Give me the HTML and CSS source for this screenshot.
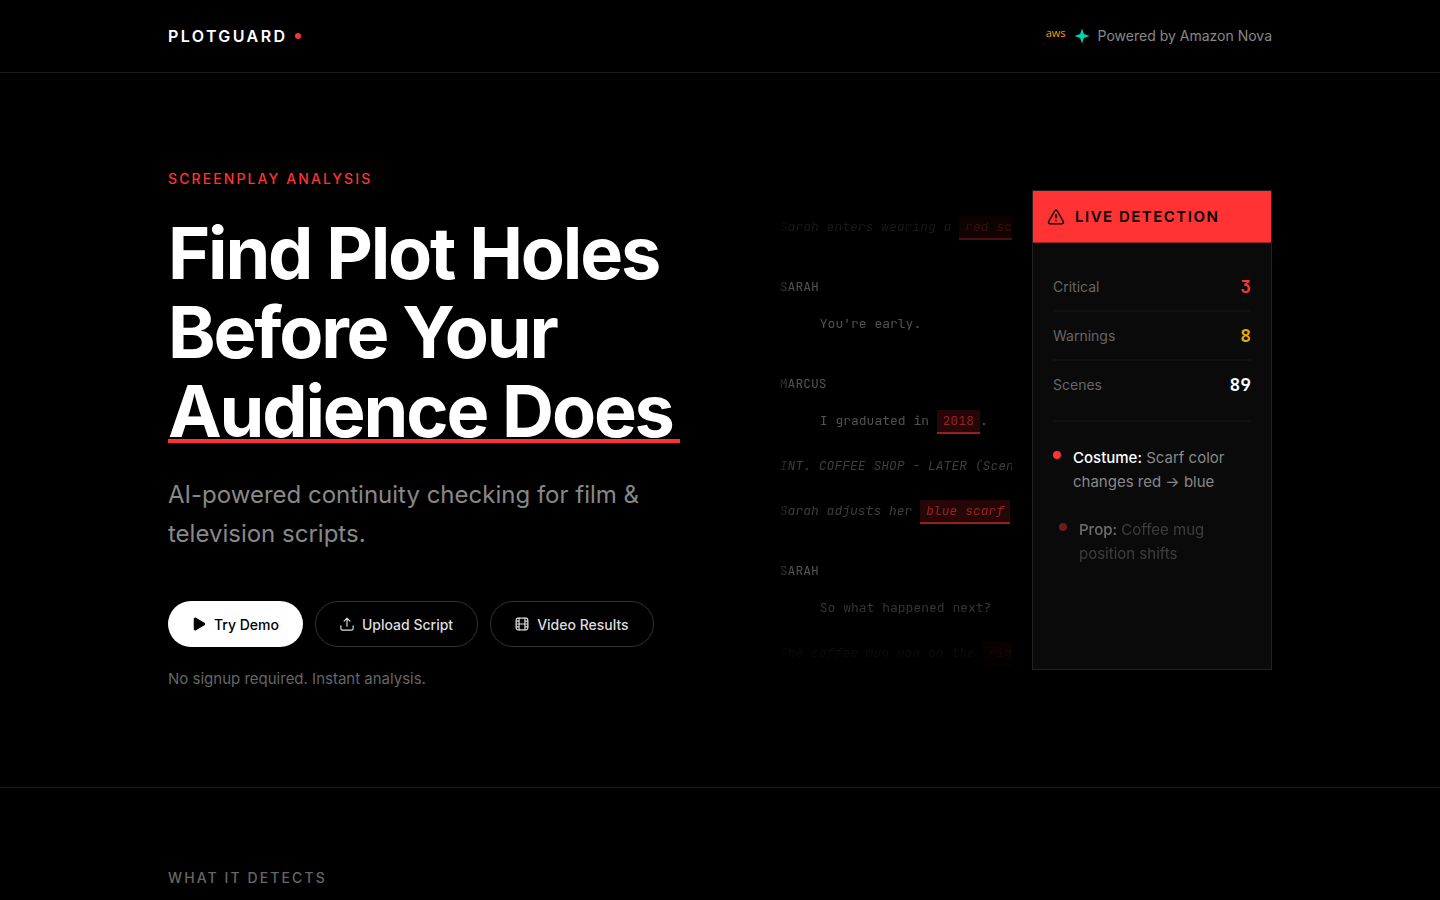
FILE: index.html
```html
<!DOCTYPE html>
<html lang="en">
<head>
  <meta charset="UTF-8">
  <meta name="viewport" content="width=device-width, initial-scale=1.0">
  <title>PlotGuard</title>
  <link rel="stylesheet" href="styles.css">
</head>
<body>
  <header class="header">
    <div class="container header-inner">
      <a href="#" class="logo">PLOTGUARD<span class="logo-dot"></span></a>
      <div class="powered">
        <span class="aws">aws</span>
        <svg class="nova" width="16" height="16" viewBox="0 0 16 16" fill="#00d4aa"><path d="M8 0.500L9.900 6.100L15.500 8L9.900 9.900L8 15.500L6.100 9.900L0.500 8L6.100 6.100Z"/></svg>
        <span>Powered by Amazon Nova</span>
      </div>
    </div>
  </header>

  <main>
    <section class="hero">
      <div class="container hero-grid">
        <div class="hero-left">
          <p class="label label-red">SCREENPLAY ANALYSIS</p>
          <h1>Find Plot Holes Before Your <span class="underline">Audience Does</span></h1>
          <p class="subtitle">AI-powered continuity checking for film &amp; television scripts.</p>
          <div class="actions">
            <button class="btn btn-primary">
              <svg width="14" height="14" viewBox="0 0 24 24" fill="currentColor" stroke="currentColor" stroke-width="2" stroke-linejoin="round"><path d="M4 3.500v17a1.500 1.500 0 0 0 2.300 1.300l14.500-8.400a1.600 1.600 0 0 0 0-2.800L6.300 2.200A1.500 1.500 0 0 0 4 3.500z"/></svg>
              Try Demo
            </button>
            <button class="btn">
              <svg width="14" height="14" viewBox="0 0 24 24" fill="none" stroke="currentColor" stroke-width="2" stroke-linecap="round" stroke-linejoin="round"><path d="M1.500 15v4.500a3 3 0 0 0 3 3h15a3 3 0 0 0 3-3V15M12 16V2M7 7l5-5 5 5"/></svg>
              Upload Script
            </button>
            <button class="btn">
              <svg width="14" height="14" viewBox="0 0 24 24" fill="none" stroke="currentColor" stroke-width="2" stroke-linecap="round" stroke-linejoin="round"><rect x="2" y="2" width="20" height="20" rx="3"/><path d="M7 2v20M17 2v20M2 12h20M2 7h5M2 17h5M17 17h5M17 7h5"/></svg>
              Video Results
            </button>
          </div>
          <p class="note">No signup required. Instant analysis.</p>
        </div>

        <div class="demo">
          <div class="script">
            <p class="action">Sarah enters wearing a <mark>red scarf</mark></p>
            <p class="character">SARAH</p>
            <p class="dialogue">You're early.</p>
            <p class="character">MARCUS</p>
            <p class="dialogue">I graduated in <mark>2018</mark>.</p>
            <p class="action">INT. COFFEE SHOP - LATER (Scene 12)</p>
            <p class="action">Sarah adjusts her <mark>blue scarf</mark></p>
            <p class="character">SARAH</p>
            <p class="dialogue">So what happened next?</p>
            <p class="action">The coffee mug now on the <mark>right side</mark></p>
          </div>

          <aside class="panel">
            <div class="panel-header">
              <svg width="18" height="18" viewBox="0 0 24 24" fill="none" stroke="currentColor" stroke-width="2" stroke-linecap="round" stroke-linejoin="round"><path d="M21.730 18l-8-14a2 2 0 0 0-3.480 0l-8 14A2 2 0 0 0 4 21h16a2 2 0 0 0 1.730-3zM12 9v4M12 17h.01"/></svg>
              <span>LIVE DETECTION</span>
            </div>
            <div class="panel-body">
              <dl class="stats">
                <div class="stat"><dt>Critical</dt><dd class="critical">3</dd></div>
                <div class="stat"><dt>Warnings</dt><dd class="warning">8</dd></div>
                <div class="stat"><dt>Scenes</dt><dd>89</dd></div>
              </dl>
              <ul class="issues">
                <li class="issue"><span class="dot"></span><p><strong>Costume:</strong> Scarf color changes red → blue</p></li>
                <li class="issue entering"><span class="dot"></span><p><strong>Prop:</strong> Coffee mug position shifts</p></li>
              </ul>
            </div>
          </aside>
        </div>
      </div>
    </section>

    <section class="detects">
      <div class="container">
        <h2 class="label">WHAT IT DETECTS</h2>
      </div>
    </section>
  </main>
</body>
</html>
```
FILE: styles.css
```css
* {
  margin: 0;
  padding: 0;
  box-sizing: border-box;
}

body {
  font-family: Inter, "Liberation Sans", sans-serif;
  background: #000;
  color: #fff;
  overflow-x: hidden;
}

.container {
  max-width: 1200px;
  margin: 0 auto;
  padding: 0 48px;
}

/* Header */
.header {
  border-bottom: 1px solid #1a1a1a;
}

.header-inner {
  display: flex;
  align-items: center;
  justify-content: space-between;
  height: 72px;
}

.logo {
  display: flex;
  align-items: center;
  gap: 8px;
  font-size: 16px;
  font-weight: 600;
  letter-spacing: 0.15em;
  color: #fff;
  text-decoration: none;
}

.logo-dot {
  width: 6px;
  height: 6px;
  border-radius: 50%;
  background: #ff3333;
}

.powered {
  display: flex;
  align-items: center;
  gap: 8px;
  font-size: 14px;
  line-height: 16px;
  color: #888;
}

.aws {
  font-family: "Open Sans", sans-serif;
  font-size: 11px;
  line-height: 14px;
  padding-bottom: 6px;
  color: #ff9900;
}

/* Hero */
.hero {
  padding: 96px 0;
  border-bottom: 1px solid #1a1a1a;
}

.hero-grid {
  display: grid;
  grid-template-columns: 1fr 1fr;
  gap: 100px;
  align-items: center;
}

.label {
  font-size: 14px;
  font-weight: 500;
  line-height: 20px;
  letter-spacing: 0.15em;
  color: #666;
}

.label-red {
  color: #ff3333;
  margin-bottom: 24px;
}

h1 {
  font-size: 72px;
  font-weight: 700;
  line-height: 79px;
  letter-spacing: -0.03em;
  margin-bottom: 25px;
}

.underline {
  position: relative;
  display: inline-block;
  padding-right: 7px;
  white-space: nowrap;
}

.underline::after {
  content: "";
  position: absolute;
  left: 0;
  right: 0;
  bottom: 7px;
  height: 4px;
  background: #ff3333;
}

.subtitle {
  font-size: 24px;
  line-height: 39px;
  color: #888;
  margin-bottom: 48px;
}

.actions {
  display: flex;
  gap: 12px;
  margin-bottom: 20px;
}

.btn {
  display: flex;
  align-items: center;
  gap: 8px;
  height: 46px;
  padding: 0 24px;
  border: 1px solid #333;
  border-radius: 23px;
  background: transparent;
  color: #ddd;
  font-family: inherit;
  font-size: 14px;
  font-weight: 500;
  white-space: nowrap;
  cursor: pointer;
}

.btn-primary {
  background: #fff;
  border: none;
  color: #000;
}

.note {
  font-size: 15px;
  line-height: 24px;
  color: #666;
}

/* Script and detection panel */
.demo {
  display: grid;
  grid-template-columns: minmax(0, 1fr) 240px;
  gap: 20px;
  height: 480px;
}

.script {
  overflow: hidden;
  padding-top: 25px;
  font-family: "JetBrains Mono", "DejaVu Sans Mono", monospace;
  font-size: 13px;
  line-height: 24px;
  white-space: nowrap;
  opacity: 0.6;
  mask-image: linear-gradient(to bottom, transparent, #000 20%, #000 80%, transparent), linear-gradient(to right, rgba(0, 0, 0, 0.4), #000 12px);
  mask-composite: intersect;
}

.action {
  font-style: italic;
  color: #666;
  margin-bottom: 21px;
}

.character {
  color: #888;
  margin-top: 36px;
  margin-bottom: 13px;
}

.dialogue {
  color: #888;
  padding-left: 40px;
  margin-bottom: 21px;
}

mark {
  padding: 2px 6px 3px;
  background: rgba(255, 51, 51, 0.25);
  border-bottom: 2px solid #ff3333;
  color: #ff3333;
}

.panel {
  background: #0a0a0a;
  border: 1px solid #222;
}

.panel-header {
  display: flex;
  align-items: center;
  gap: 10px;
  height: 52px;
  padding: 0 14px;
  background: #ff3333;
  border-bottom: 1px solid #992222;
  color: #000;
  font-size: 15px;
  font-weight: 600;
  letter-spacing: 1.5px;
}

.panel-body {
  padding: 20px;
}

.stats {
  padding-bottom: 12px;
  border-bottom: 2px solid #111;
}

.stat {
  display: flex;
  justify-content: space-between;
  padding: 12px 0 11px;
  border-bottom: 2px solid #111;
  font-size: 14px;
  line-height: 24px;
  color: #666;
}

.stat:last-child {
  border-bottom: none;
}

.stat dd {
  font-family: "JetBrains Mono", "DejaVu Sans Mono", monospace;
  font-size: 18px;
  font-weight: 700;
  color: #fff;
}

.stat .critical {
  color: #ff3333;
}

.stat .warning {
  color: #e5ac00;
}

.issues {
  list-style: none;
  padding-top: 24px;
}

.issue {
  display: flex;
  gap: 12px;
  margin-bottom: 24px;
  font-size: 15px;
  line-height: 24px;
  color: #888;
}

.issue strong {
  font-weight: 500;
  color: #fff;
}

.dot {
  flex-shrink: 0;
  width: 8px;
  height: 8px;
  margin-top: 5px;
  border-radius: 50%;
  background: #ff3333;
}

/* next issue, still fading in */
.entering {
  margin-left: 6px;
  opacity: 0.4;
}

/* Detects */
.detects {
  padding: 80px 0;
}
```
